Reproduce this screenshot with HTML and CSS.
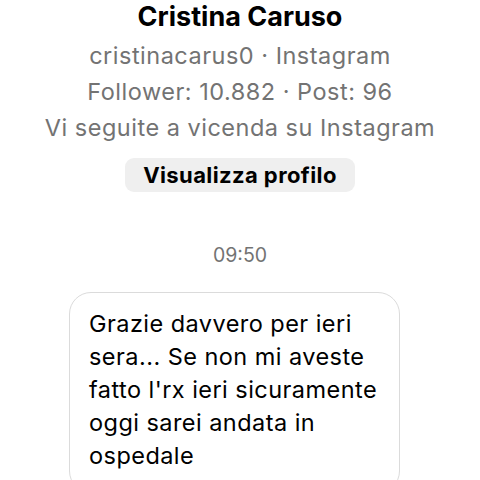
FILE: index.html
```html
<!DOCTYPE html>
<html lang="it">
<head>
  <meta charset="UTF-8">
  <meta name="viewport" content="width=device-width, initial-scale=1.0">
  <title>Cristina Caruso</title>
  <link rel="stylesheet" href="styles.css">
</head>
<body>
  <div class="profile">
    <h1 class="name">Cristina Caruso</h1>
    <p class="info">cristinacarus0 · Instagram</p>
    <p class="info">Follower: 10.882 · Post: 96</p>
    <p class="info">Vi seguite a vicenda su Instagram</p>
    <button class="profile-btn">Visualizza profilo</button>
  </div>

  <div class="time">09:50</div>

  <div class="chat">
    <div class="bubble">
      Grazie davvero per ieri<br>
      sera... Se non mi aveste<br>
      fatto l'rx ieri sicuramente<br>
      oggi sarei andata in<br>
      ospedale
    </div>
  </div>
</body>
</html>
```

FILE: styles.css
```css
body {
  margin: 0;
  font-family: Inter, "Liberation Sans", Arial, sans-serif;
  background: #ffffff;
  color: #000;
  overflow: hidden;
}
.profile {
  display: flex;
  flex-direction: column;
  align-items: center;
}
.name {
  margin: 0 0 4px;
  font-size: 27px;
  line-height: 34px;
  font-weight: 700;
}
.info {
  margin: 0;
  font-size: 23.5px;
  line-height: 36px;
  letter-spacing: 0.5px;
  color: #737373;
}
.profile-btn {
  margin-top: 12px;
  height: 34px;
  width: 230px;
  padding: 0;
  border: none;
  border-radius: 9px;
  background: #efefef;
  font-family: inherit;
  font-size: 22px;
  line-height: 34px;
  letter-spacing: 0.4px;
  font-weight: 700;
  color: #000;
}
.time {
  margin-top: 51px;
  text-align: center;
  font-size: 19.5px;
  line-height: 24px;
  color: #737373;
}
.chat {
  margin-top: 25px;
  padding-left: 69px;
}
.bubble {
  width: 291px;
  padding: 14px 19px 20px;
  border: 1px solid #dbdbdb;
  border-radius: 22px;
  font-size: 23.5px;
  line-height: 33px;
  letter-spacing: 0.45px;
}
```
